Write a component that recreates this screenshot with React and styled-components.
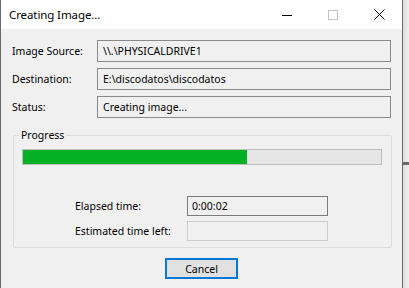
import styled, { createGlobalStyle } from "styled-components";

const GlobalStyle = createGlobalStyle`
  body {
    margin: 0;
    background: #e6e6e6;
    font-family: "Noto Sans", "Open Sans", sans-serif;
    color: #000;
  }
`;

const Desktop = styled.div`
  display: flex;
  width: 409px;
  height: 288px;
  overflow: hidden;
`;

const Window = styled.div`
  width: 401px;
  flex-shrink: 0;
  display: flex;
  flex-direction: column;
  background: #f0f0f0;
  border-left: 1px solid #6b6b6b;
  border-right: 1px solid #6b6b6b;
`;

const Backdrop = styled.div`
  flex: 1;
  display: flex;
  flex-direction: column;
  background: linear-gradient(90deg, #dcdcdc, #efefef);
`;

const BackdropBar = styled.div`
  margin-top: 162px;
  height: 3px;
  background: #6a6a6a;
`;

const TitleBar = styled.div`
  height: 29px;
  display: flex;
  align-items: center;
  background: #fff;
`;

const Title = styled.div`
  flex: 1;
  padding-left: 8px;
  font-size: 11.5px;
  letter-spacing: -0.1px;
`;

const CaptionButton = styled.div`
  width: 46px;
  height: 29px;
  display: flex;
  align-items: center;
  justify-content: center;
`;

const Content = styled.div`
  display: flex;
  flex-direction: column;
  padding: 11px 11px 0 11px;
`;

const InfoGrid = styled.div`
  display: grid;
  grid-template-columns: 85px 1fr;
  grid-auto-rows: 22px;
  row-gap: 6px;
  align-items: center;
`;

const Label = styled.div`
  font-size: 10.5px;
  white-space: nowrap;
`;

const Field = styled.div`
  height: 22px;
  box-sizing: border-box;
  display: flex;
  align-items: center;
  padding-left: 5px;
  font-size: 10.5px;
  border: 1px solid ${({ $border }) => $border || "#8a8a8a"};
  background: #f0f0f0;
  white-space: nowrap;
`;

const Group = styled.fieldset`
  margin: 10px -1px 0 1px;
  padding: 7px 9px 6px 8px;
  border: 1px solid #dcdcdc;
  border-radius: 2px;
  min-width: 0;
`;

const Legend = styled.legend`
  padding: 0 2px;
  margin-left: -3px;
  font-size: 10.5px;
  line-height: 14px;
`;

const ProgressTrack = styled.div`
  height: 16px;
  box-sizing: border-box;
  border: 1px solid #bcbcbc;
  background: #e6e6e6;
`;

const ProgressFill = styled.div`
  height: 100%;
  background: #06b025;
`;

const TimeGrid = styled.div`
  display: grid;
  grid-template-columns: 112px 141px;
  grid-auto-rows: 20px;
  row-gap: 5px;
  align-items: center;
  margin: 31px 0 0 53px;
`;

const TimeField = styled(Field)`
  height: 20px;
  padding-left: 4px;
`;

const Button = styled.button`
  align-self: center;
  margin-top: 10px;
  width: 73px;
  height: 21px;
  box-sizing: border-box;
  border: 2px solid #0078d7;
  background: #e1e1e1;
  font-family: inherit;
  font-size: 10.5px;
  color: #000;
  padding: 0;
`;

function App() {
  const progress = 62.7;
  return (
    <Desktop>
      <GlobalStyle />
      <Window>
        <TitleBar>
          <Title>Creating Image...</Title>
          <CaptionButton>
            <svg width="10" height="10" viewBox="0 0 10 10">
              <path d="M0 5.5h10" stroke="#000" strokeWidth="1" />
            </svg>
          </CaptionButton>
          <CaptionButton>
            <svg width="10" height="10" viewBox="0 0 10 10">
              <rect x="0.5" y="0.5" width="9" height="9" fill="none" stroke="#c4c4c4" />
            </svg>
          </CaptionButton>
          <CaptionButton>
            <svg width="11" height="11" viewBox="0 0 11 11">
              <path d="M0.5 0.5l10 10M10.5 0.5l-10 10" stroke="#000" strokeWidth="1" />
            </svg>
          </CaptionButton>
        </TitleBar>
        <Content>
          <InfoGrid>
            <Label>Image Source:</Label>
            <Field>\\.\PHYSICALDRIVE1</Field>
            <Label>Destination:</Label>
            <Field>E:\discodatos\discodatos</Field>
            <Label>Status:</Label>
            <Field>Creating image...</Field>
          </InfoGrid>
          <Group>
            <Legend>Progress</Legend>
            <ProgressTrack>
              <ProgressFill style={{ width: `${progress}%` }} />
            </ProgressTrack>
            <TimeGrid>
              <Label>Elapsed time:</Label>
              <TimeField $border="#7a7a7a">0:00:02</TimeField>
              <Label>Estimated time left:</Label>
              <TimeField $border="#cccccc" />
            </TimeGrid>
          </Group>
          <Button>Cancel</Button>
        </Content>
      </Window>
      <Backdrop>
        <BackdropBar />
      </Backdrop>
    </Desktop>
  );
}

export default App;
